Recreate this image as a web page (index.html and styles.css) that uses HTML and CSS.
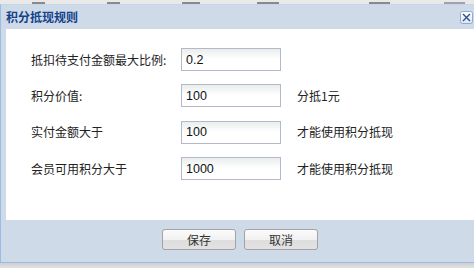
FILE: index.html
```html
<!DOCTYPE html>
<html lang="zh-CN">
<head>
<meta charset="utf-8">
<title>积分抵现规则</title>
<link rel="stylesheet" href="styles.css">
</head>
<body>
<div class="behind">
  <span class="frag f1"></span>
  <span class="frag f2"></span>
  <span class="frag f3"></span>
  <span class="frag f4"></span>
  <span class="frag f5"></span>
  <span class="frag f6"></span>
</div>
<div class="window">
  <div class="titlebar">
    <span class="title">积分抵现规则</span>
    <span class="close">
      <svg width="13" height="13" viewBox="0 0 13 13">
        <defs>
          <linearGradient id="cg" x1="0" y1="0" x2="0" y2="1">
            <stop offset="0" stop-color="#ffffff"/>
            <stop offset="1" stop-color="#dbe6f4"/>
          </linearGradient>
        </defs>
        <rect x="0.5" y="0.5" width="12" height="12" rx="2" ry="2" fill="url(#cg)" stroke="#8fa9cf"/>
        <path d="M3.5 3.5 L9.5 9.5 M9.5 3.5 L3.5 9.5" stroke="#2f4f8f" stroke-width="1.4" stroke-linecap="square"/>
      </svg>
    </span>
  </div>
  <div class="content">
    <div class="form">
      <label class="lbl">抵扣待支付金额最大比例:</label>
      <input class="field" type="text" value="0.2">
      <span class="note"></span>

      <label class="lbl">积分价值:</label>
      <input class="field" type="text" value="100">
      <span class="note">分抵1元</span>

      <label class="lbl">实付金额大于</label>
      <input class="field" type="text" value="100">
      <span class="note">才能使用积分抵现</span>

      <label class="lbl">会员可用积分大于</label>
      <input class="field" type="text" value="1000">
      <span class="note">才能使用积分抵现</span>
    </div>
  </div>
  <div class="footer">
    <button class="btn" type="button">保存</button>
    <button class="btn" type="button">取消</button>
  </div>
</div>
</body>
</html>
```
FILE: styles.css
```css
html, body {
  margin: 0;
  padding: 0;
}
body {
  width: 474px;
  height: 268px;
  overflow: hidden;
  background: linear-gradient(#e9e9e9 0, #e9e9e9 262px, #cfcfcf 263px, #e2e2e2 268px);
  font-family: "Noto Sans CJK SC", "Liberation Sans", sans-serif;
}
.behind {
  height: 4px;
  display: flex;
  align-items: flex-start;
}
.frag {
  display: block;
  height: 2px;
  margin-top: 2px;
  background: #8a8a8a;
}
.f1 { margin-left: 32px; width: 13px; }
.f2 { margin-left: 62px; width: 13px; }
.f3 { margin-left: 62px; width: 18px; }
.f4 { margin-left: 57px; width: 22px; }
.f5 { margin-left: 90px; width: 21px; }
.f6 { margin-left: 54px; width: 21px; background: #a0a0b0; }

.window {
  width: 478px;
  height: 257px;
  border: 1px solid #99bbe8;
  border-top-color: #c6d5e8;
  background: #cedae7;
  display: flex;
  flex-direction: column;
}
.titlebar {
  height: 24px;
  flex: none;
  display: flex;
  align-items: center;
  padding-left: 5px;
}
.title {
  font-size: 12px;
  font-weight: bold;
  color: #15428b;
  line-height: 14px;
  flex: 1;
}
.close {
  width: 13px;
  height: 13px;
  margin-right: 6px;
  margin-top: 1px;
  display: block;
}
.close svg {
  display: block;
}
.content {
  height: 191px;
  flex: none;
  margin: 0 5px;
  background: #ffffff;
}
.form {
  padding: 19px 0 0 25px;
  display: grid;
  grid-template-columns: 134px 100px auto;
  grid-auto-rows: 23px;
  row-gap: 13.4px;
  column-gap: 16px;
  align-items: center;
}
.lbl {
  font-size: 12px;
  color: #222222;
  line-height: 16px;
  white-space: nowrap;
}
.field {
  box-sizing: border-box;
  width: 100px;
  height: 23px;
  margin: 0;
  padding: 0 0 0 4px;
  border: 1px solid #b5b8c8;
  background: linear-gradient(#e9eded 0, #ffffff 10px);
  font-family: "Liberation Sans", sans-serif;
  font-size: 12.5px;
  color: #111111;
  outline: none;
}
.note {
  font-size: 12px;
  color: #222222;
  line-height: 16px;
  white-space: nowrap;
}
.footer {
  flex: 1;
  display: flex;
  justify-content: center;
  gap: 8px;
  padding-top: 9px;
}
.btn {
  box-sizing: border-box;
  width: 74px;
  height: 21px;
  margin: 0;
  padding: 0;
  border: 1px solid #a3a3a3;
  border-radius: 3px;
  background: linear-gradient(#fbfbfb 0, #f1f1f1 50%, #dedede 55%, #e2e2e2 100%);
  font-family: "Noto Sans CJK SC", sans-serif;
  font-size: 12px;
  line-height: 17px;
  color: #333333;
}
```
